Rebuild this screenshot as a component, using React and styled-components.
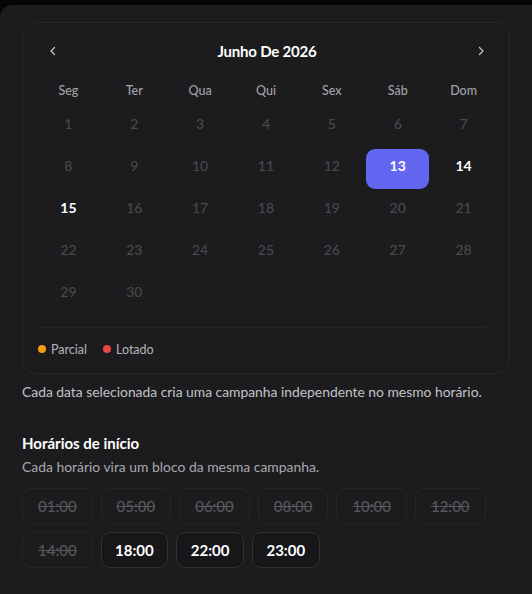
import React, { useState } from "react";
import styled, { createGlobalStyle } from "styled-components";

const GlobalStyle = createGlobalStyle`
  html, body {
    margin: 0;
    padding: 0;
    background: #050505;
    overflow: hidden;
  }
  body {
    font-family: Lato, "Noto Sans", sans-serif;
    -webkit-font-smoothing: antialiased;
  }
`;

// 바깥 패널
const Panel = styled.div`
  margin-top: 5px;
  min-height: 600px;
  box-sizing: border-box;
  background: #1c1c1e;
  border-top-left-radius: 12px;
  padding: 17px 22px 0 22px;
`;

const Card = styled.div`
  width: 488px;
  box-sizing: border-box;
  border: 1px solid #28282b;
  border-radius: 14px;
  padding: 12px 14px 14px 14px;
`;

const Header = styled.div`
  display: flex;
  align-items: center;
  justify-content: space-between;
  height: 32px;
  padding: 0 6px 0 8px;
`;

const Title = styled.div`
  color: #ffffff;
  font-size: 15px;
  font-weight: 700;
  letter-spacing: -0.2px;
`;

const NavButton = styled.button`
  background: none;
  border: none;
  padding: 0;
  width: 16px;
  height: 16px;
  display: flex;
  align-items: center;
  justify-content: center;
  color: #c8c8cc;
  cursor: pointer;
`;

const WeekRow = styled.div`
  display: grid;
  grid-template-columns: repeat(7, 1fr);
  column-gap: 3px;
  margin-top: 11px;
  height: 24px;
  align-items: center;
`;

const WeekDay = styled.div`
  text-align: center;
  color: #a1a1a8;
  font-size: 12.5px;
  font-weight: 500;
`;

const DayGrid = styled.div`
  display: grid;
  grid-template-columns: repeat(7, 1fr);
  grid-auto-rows: 40px;
  column-gap: 3px;
  row-gap: 2px;
  margin-top: 5px;
`;

const Day = styled.button`
  border: none;
  border-radius: 9px;
  font-family: inherit;
  font-size: 14px;
  display: flex;
  align-items: center;
  justify-content: center;
  padding: 0 0 7px 0;
  background: ${(p) => (p.$selected ? "#6366f1" : "transparent")};
  color: ${(p) => (p.$selected || p.$available ? "#ffffff" : "#48484d")};
  font-weight: ${(p) => (p.$selected || p.$available ? 700 : 500)};
  cursor: ${(p) => (p.$selected || p.$available ? "pointer" : "default")};
`;

const Divider = styled.div`
  height: 1px;
  background: #252528;
  margin: 12px 9px 0 1px;
`;

const Legend = styled.div`
  display: flex;
  align-items: center;
  gap: 16px;
  margin-top: 11px;
  height: 20px;
  padding-left: 1px;
`;

const LegendItem = styled.div`
  display: flex;
  align-items: center;
  gap: 5px;
  color: #b4b4ba;
  font-size: 12.5px;
`;

const Dot = styled.span`
  width: 8px;
  height: 8px;
  border-radius: 50%;
  background: ${(p) => p.$color};
`;

const Note = styled.p`
  margin: 9px 0 0 0;
  color: #c2c2c8;
  font-size: 13.85px;
  line-height: 18px;
`;

const SectionTitle = styled.h3`
  margin: 32px 0 0 0;
  color: #ffffff;
  font-size: 15px;
  font-weight: 700;
  line-height: 20px;
`;

const SectionSub = styled.p`
  margin: 5px 0 0 0;
  color: #a8a8ae;
  font-size: 13.9px;
  line-height: 18px;
`;

const TimeGrid = styled.div`
  display: flex;
  flex-wrap: wrap;
  gap: 8px 8px;
  margin-top: 12px;
  width: 470px;
`;

const TimeButton = styled.button`
  height: 36px;
  box-sizing: border-box;
  padding: ${(p) => (p.$disabled ? "0 15px" : "0 13.5px")};
  border-radius: 9px;
  font-family: inherit;
  font-size: 15px;
  font-weight: ${(p) => (p.$disabled ? 500 : 700)};
  background: ${(p) => (p.$disabled ? "transparent" : "#171719")};
  border: 1px solid ${(p) => (p.$disabled ? "#262629" : "#313134")};
  color: ${(p) => (p.$disabled ? "#56565b" : "#ffffff")};
  text-decoration: ${(p) => (p.$disabled ? "line-through" : "none")};
  cursor: ${(p) => (p.$disabled ? "default" : "pointer")};
`;

const Chevron = ({ dir }) => (
  <svg width="12" height="12" viewBox="0 0 24 24" fill="none" stroke="currentColor" strokeWidth="2.4" strokeLinecap="round" strokeLinejoin="round">
    {dir === "left" ? <path d="M15 5l-7 7 7 7" /> : <path d="M9 5l7 7-7 7" />}
  </svg>
);

const WEEK = ["Seg", "Ter", "Qua", "Qui", "Sex", "Sáb", "Dom"];
const TIMES = [
  { t: "01:00", off: true },
  { t: "05:00", off: true },
  { t: "06:00", off: true },
  { t: "08:00", off: true },
  { t: "10:00", off: true },
  { t: "12:00", off: true },
  { t: "14:00", off: true },
  { t: "18:00" },
  { t: "22:00" },
  { t: "23:00" },
];

export default function App() {
  const [selected, setSelected] = useState(13);
  const available = [13, 14, 15];
  const days = Array.from({ length: 30 }, (_, i) => i + 1);

  return (
    <>
      <GlobalStyle />
      <Panel>
        <Card>
          <Header>
            <NavButton><Chevron dir="left" /></NavButton>
            <Title>Junho De 2026</Title>
            <NavButton><Chevron dir="right" /></NavButton>
          </Header>
          <WeekRow>
            {WEEK.map((w) => (
              <WeekDay key={w}>{w}</WeekDay>
            ))}
          </WeekRow>
          <DayGrid>
            {days.map((d) => (
              <Day
                key={d}
                $selected={d === selected}
                $available={available.includes(d)}
                onClick={() => available.includes(d) && setSelected(d)}
              >
                {d}
              </Day>
            ))}
          </DayGrid>
          <Divider />
          <Legend>
            <LegendItem><Dot $color="#f59e0b" />Parcial</LegendItem>
            <LegendItem><Dot $color="#ef4444" />Lotado</LegendItem>
          </Legend>
        </Card>
        <Note>Cada data selecionada cria uma campanha independente no mesmo horário.</Note>
        <SectionTitle>Horários de início</SectionTitle>
        <SectionSub>Cada horário vira um bloco da mesma campanha.</SectionSub>
        <TimeGrid>
          {TIMES.map((x) => (
            <TimeButton key={x.t} $disabled={x.off}>{x.t}</TimeButton>
          ))}
        </TimeGrid>
      </Panel>
    </>
  );
}
